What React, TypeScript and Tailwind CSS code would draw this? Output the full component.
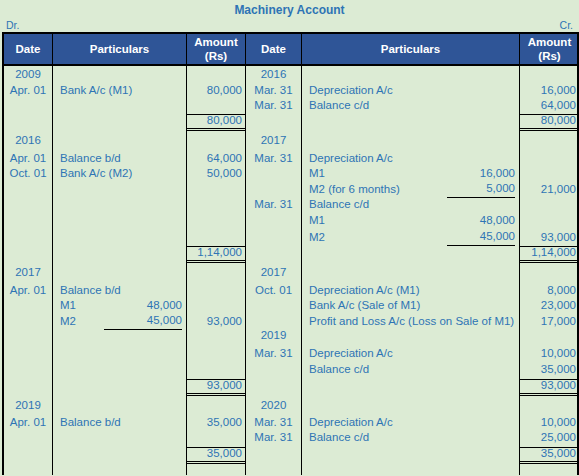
type Side = { d?: string; p?: string; inner?: string; innerLine?: boolean; amt?: string; center?: boolean };
type Row = { h: number; l: Side; r: Side; total?: [boolean, boolean] };

const rows: Row[] = [
    { h: 16, l: { d: '2009' }, r: { d: '2016' } },
    { h: 15, l: { d: 'Apr. 01', p: 'Bank A/c (M1)', amt: '80,000' }, r: { d: 'Mar. 31', p: 'Depreciation A/c', amt: '16,000' } },
    { h: 15, l: {}, r: { d: 'Mar. 31', p: 'Balance c/d', amt: '64,000' } },
    { h: 20, l: { amt: '80,000' }, r: { amt: '80,000' }, total: [true, true] },
    { h: 18, l: { d: '2016' }, r: { d: '2017' } },
    { h: 15, l: { d: 'Apr. 01', p: 'Balance b/d', amt: '64,000' }, r: { d: 'Mar. 31', p: 'Depreciation A/c' } },
    { h: 15, l: { d: 'Oct. 01', p: 'Bank A/c (M2)', amt: '50,000' }, r: { p: 'M1', inner: '16,000' } },
    { h: 16, l: {}, r: { p: 'M2 (for 6 months)', inner: '5,000', innerLine: true, amt: '21,000' } },
    { h: 16, l: {}, r: { d: 'Mar. 31', p: 'Balance c/d' } },
    { h: 16, l: {}, r: { p: 'M1', inner: '48,000' } },
    { h: 16, l: {}, r: { p: 'M2', inner: '45,000', innerLine: true, amt: '93,000' } },
    { h: 20, l: { amt: '1,14,000' }, r: { amt: '1,14,000' }, total: [true, true] },
    { h: 18, l: { d: '2017' }, r: { d: '2017' } },
    { h: 15, l: { d: 'Apr. 01', p: 'Balance b/d' }, r: { d: 'Oct. 01', p: 'Depreciation A/c (M1)', amt: '8,000' } },
    { h: 15, l: { p: 'M1', inner: '48,000' }, r: { p: 'Bank A/c (Sale of M1)', amt: '23,000' } },
    { h: 15, l: { p: 'M2', inner: '45,000', innerLine: true, amt: '93,000' }, r: { p: 'Profit and Loss A/c (Loss on Sale of M1)', amt: '17,000' } },
    { h: 18, l: {}, r: { d: '2019' } },
    { h: 16, l: {}, r: { d: 'Mar. 31', p: 'Depreciation A/c', amt: '10,000' } },
    { h: 16, l: {}, r: { p: 'Balance c/d', amt: '35,000' } },
    { h: 20, l: { amt: '93,000' }, r: { amt: '93,000' }, total: [true, true] },
    { h: 17, l: { d: '2019' }, r: { d: '2020' } },
    { h: 15, l: { d: 'Apr. 01', p: 'Balance b/d', amt: '35,000' }, r: { d: 'Mar. 31', p: 'Depreciation A/c', amt: '10,000' } },
    { h: 16, l: {}, r: { d: 'Mar. 31', p: 'Balance c/d', amt: '25,000' } },
    { h: 20, l: { amt: '35,000' }, r: { amt: '35,000' }, total: [true, true] },
    { h: 10, l: {}, r: {} },
];

const grid = 'grid grid-cols-[49px_134px_59px_56px_218px_59px]';

function Cells({ s, total, wide }: { s: Side; total?: boolean; wide: boolean }) {
    return (
        <>
            <div className="flex items-center justify-center border-r border-black">{s.d}</div>
            <div className="flex items-center border-r border-black pl-[7px]">
                <span className="flex-1 whitespace-nowrap">{s.p}</span>
                {s.inner !== undefined && (
                    <span
                        className={`mr-[4px] flex h-full items-center justify-end ${wide ? 'w-[68px]' : 'w-[78px]'} ${s.innerLine ? 'border-b border-black' : ''}`}
                    >
                        {s.inner}
                    </span>
                )}
            </div>
            <div className="flex items-center border-r border-black last:border-r-0">
                <div
                    className={`flex w-full items-center justify-end pr-[3px] ${total ? 'h-[17px] border-t border-b-[3px] border-double border-black' : 'h-full'}`}
                >
                    {s.amt}
                </div>
            </div>
        </>
    );
}

export default function App() {
    return (
        <div
            className="h-[476px] w-[579px] overflow-hidden bg-[#dcebd4] text-[11.5px] text-[#2e74b5]"
            style={{ fontFamily: '"Liberation Sans", Arial, sans-serif' }}
        >
            <div className="pt-[1px] text-center text-[12px] font-bold">Machinery Account</div>
            <div className="flex justify-between px-[6px] text-[10.5px] leading-[13px]">
                <span>Dr.</span>
                <span>Cr.</span>
            </div>
            <div className="ml-[2px] w-[577px] border-x-2 border-t-2 border-black">
                <div className={`${grid} h-[32px] border-b-2 border-black bg-[#2f5597] font-bold text-white`}>
                    {['Date', 'Particulars', 'Amount\n(Rs)', 'Date', 'Particulars', 'Amount\n(Rs)'].map((t, i) => (
                        <div
                            key={i}
                            className="flex items-center justify-center whitespace-pre-line border-r border-black text-center leading-[14px] last:border-r-0"
                        >
                            {t}
                        </div>
                    ))}
                </div>
                {rows.map((r, i) => (
                    <div key={i} className={grid} style={{ height: r.h }}>
                        <Cells s={r.l} total={r.total?.[0]} wide={false} />
                        <Cells s={r.r} total={r.total?.[1]} wide />
                    </div>
                ))}
            </div>
        </div>
    );
}
